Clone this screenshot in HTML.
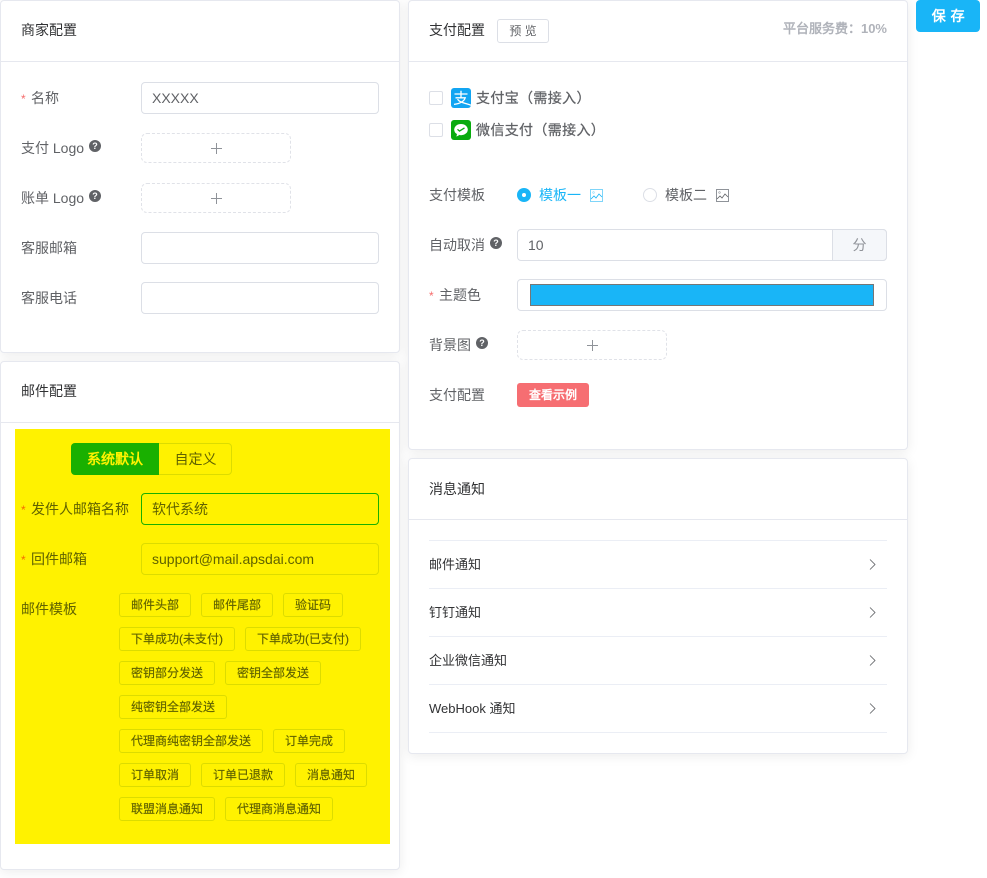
<!DOCTYPE html>
<html lang="zh"><head><meta charset="utf-8"><title>配置</title>
<style>
*{box-sizing:border-box;margin:0;padding:0}
html,body{width:987px;height:878px;background:#fff;overflow:hidden}
body{position:relative;font-family:"Liberation Sans","WenQuanYi Zen Hei",sans-serif;font-size:14px;color:#606266}
.a{position:absolute;white-space:nowrap}
.card{position:absolute;background:#fff;border:1px solid #e6e8ef;border-radius:4px;box-shadow:0 2px 12px rgba(0,0,0,.08)}
.line{position:absolute;height:1px;background:#e6e8ef}
.t{position:absolute;white-space:nowrap;line-height:20px;height:20px}
.h{color:#303133}
.inp{position:absolute;height:32px;border:1px solid #dcdfe6;border-radius:4px;background:#fff;line-height:30px;padding-left:10px;white-space:nowrap}
.up{position:absolute;width:150px;height:30px;border:1px dashed #e0e2e8;border-radius:6px}
.up:before{content:"";position:absolute;left:69px;top:13.5px;width:11px;height:1px;background:#8f9399}
.up:after{content:"";position:absolute;left:74px;top:8.5px;width:1px;height:11px;background:#8f9399}
.req{color:#f56c6c;font-size:12px;display:inline-block;width:10px}
.tag{position:absolute;height:24px;border:1px solid #dcdc00;border-radius:3px;color:#606200;font-size:12px;line-height:22px;text-align:center;white-space:nowrap;-webkit-text-stroke:.15px #606200}
.cb{position:absolute;width:14px;height:14px;border:1px solid #dcdfe6;border-radius:2px;background:#fff}
.n{position:absolute;font-size:13px;color:#303133;line-height:20px;height:20px;white-space:nowrap}
.pay{letter-spacing:.35px;-webkit-text-stroke:.25px #606266}
svg{position:absolute;display:block}
.q text{font:bold 9px "Liberation Sans",sans-serif;fill:#fff}
</style></head><body>

<!-- 商家配置 -->
<div class="card" style="left:0;top:0;width:400px;height:353px"></div>
<div class="line" style="left:1px;top:61px;width:398px"></div>
<div class="t h" style="left:21px;top:20px">商家配置</div>
<div class="t" style="left:21px;top:88px"><span class="req">*</span>名称</div>
<div class="inp" style="left:141px;top:82px;width:238px">XXXXX</div>
<div class="t" style="left:21px;top:138px">支付 Logo</div>
<svg class="q" style="left:89px;top:140px" width="12" height="12" viewBox="0 0 12 12"><circle cx="6" cy="6" r="6" fill="#606266"/><text x="6" y="9.2" text-anchor="middle">?</text></svg>
<div class="up" style="left:141px;top:133px"></div>
<div class="t" style="left:21px;top:188px">账单 Logo</div>
<svg class="q" style="left:89px;top:190px" width="12" height="12" viewBox="0 0 12 12"><circle cx="6" cy="6" r="6" fill="#606266"/><text x="6" y="9.2" text-anchor="middle">?</text></svg>
<div class="up" style="left:141px;top:183px"></div>
<div class="t" style="left:21px;top:238px">客服邮箱</div>
<div class="inp" style="left:141px;top:232px;width:238px"></div>
<div class="t" style="left:21px;top:288px">客服电话</div>
<div class="inp" style="left:141px;top:282px;width:238px"></div>

<!-- 邮件配置 -->
<div class="card" style="left:0;top:361px;width:400px;height:509px"></div>
<div class="line" style="left:1px;top:422px;width:398px"></div>
<div class="t h" style="left:21px;top:381px">邮件配置</div>
<div class="a" style="left:15px;top:429px;width:375px;height:415px;background:#fff200"></div>
<div class="a" style="left:71px;top:443px;width:161px;height:32px;border:1px solid #dcdc00;border-radius:4px"></div>
<div class="a" style="left:71px;top:443px;width:88px;height:32px;background:#19b000;border-radius:4px 0 0 4px;color:#fff200;text-align:center;line-height:32px;font-weight:bold">系统默认</div>
<div class="a" style="left:159px;top:443px;width:73px;height:32px;color:#606200;text-align:center;line-height:32px">自定义</div>
<div class="t" style="left:21px;top:499px;color:#606200"><span class="req" style="color:#f56c00">*</span>发件人邮箱名称</div>
<div class="inp" style="left:141px;top:493px;width:238px;background:none;border-color:#19b000;color:#606200">软代系统</div>
<div class="t" style="left:21px;top:549px;color:#606200"><span class="req" style="color:#f56c00">*</span>回件邮箱</div>
<div class="inp" style="left:141px;top:543px;width:238px;background:none;border-color:#dcdc00;color:#606200">support@mail.apsdai.com</div>
<div class="t" style="left:21px;top:599px;color:#606200">邮件模板</div>

<div class="tag" style="left:119px;top:593px;width:72px">邮件头部</div>
<div class="tag" style="left:201px;top:593px;width:72px">邮件尾部</div>
<div class="tag" style="left:283px;top:593px;width:60px">验证码</div>
<div class="tag" style="left:119px;top:627px;width:116px">下单成功(未支付)</div>
<div class="tag" style="left:245px;top:627px;width:116px">下单成功(已支付)</div>
<div class="tag" style="left:119px;top:661px;width:96px">密钥部分发送</div>
<div class="tag" style="left:225px;top:661px;width:96px">密钥全部发送</div>
<div class="tag" style="left:119px;top:695px;width:108px">纯密钥全部发送</div>
<div class="tag" style="left:119px;top:729px;width:144px">代理商纯密钥全部发送</div>
<div class="tag" style="left:273px;top:729px;width:72px">订单完成</div>
<div class="tag" style="left:119px;top:763px;width:72px">订单取消</div>
<div class="tag" style="left:201px;top:763px;width:84px">订单已退款</div>
<div class="tag" style="left:295px;top:763px;width:72px">消息通知</div>
<div class="tag" style="left:119px;top:797px;width:96px">联盟消息通知</div>
<div class="tag" style="left:225px;top:797px;width:108px">代理商消息通知</div>

<!-- 支付配置 -->
<div class="card" style="left:408px;top:0;width:500px;height:450px"></div>
<div class="line" style="left:409px;top:61px;width:498px"></div>
<div class="t h" style="left:429px;top:20px">支付配置</div>
<div class="a" style="left:497px;top:19px;width:52px;height:24px;border:1px solid #dcdfe6;border-radius:3px;font-size:12px;line-height:22px;text-align:center;color:#606266">预 览</div>
<div class="a" style="right:100px;top:20px;font-size:13px;line-height:17px;color:#b0b3ba;font-weight:bold">平台服务费：10%</div>

<div class="cb" style="left:429px;top:91px"></div>
<svg style="left:451px;top:88px" width="20" height="20" viewBox="0 0 20 20"><rect width="20" height="20" rx="3" fill="#12a5f2"/><path d="M3.5 6H16.5M10 2.8V9.6M4.5 9.8H14.2C13 13.5 9 15.6 3 16.4M6.5 11.2C9 14.6 13.5 15 20 17.2" fill="none" stroke="#fff" stroke-width="1.3"/></svg>
<div class="t pay" style="left:476px;top:88px">支付宝（需接入）</div>
<div class="cb" style="left:429px;top:123px"></div>
<svg style="left:451px;top:120px" width="20" height="20" viewBox="0 0 20 20"><rect width="20" height="20" rx="3" fill="#09ab0e"/><ellipse cx="10" cy="9.6" rx="6.8" ry="5.6" fill="#fff"/><path d="M6 14l-.6 2.6 3-1.6z" fill="#fff"/><path d="M6.5 9.3l2 1.8 5-3.2" fill="none" stroke="#09ab0e" stroke-width="1.3"/></svg>
<div class="t pay" style="left:476px;top:120px">微信支付（需接入）</div>

<div class="t" style="left:429px;top:185px">支付模板</div>
<div class="a" style="left:517px;top:188px;width:14px;height:14px;border-radius:50%;background:#19b5f7"></div>
<div class="a" style="left:522px;top:193px;width:4px;height:4px;border-radius:50%;background:#fff"></div>
<div class="t" style="left:539px;top:185px;color:#19b5f7">模板一</div>
<svg style="left:590px;top:189px" width="13" height="13" viewBox="0 0 13 13" fill="none" stroke="#7fd5f9"><rect x=".5" y=".5" width="12" height="12"/><path d="M1 10l3-3 2 2 3-4 3 3" stroke-width=".8" stroke="#19b5f7"/><circle cx="3.5" cy="3.5" r=".8" stroke-width=".6"/></svg>
<div class="a" style="left:643px;top:188px;width:14px;height:14px;border-radius:50%;border:1px solid #dcdfe6"></div>
<div class="t" style="left:665px;top:185px">模板二</div>
<svg style="left:716px;top:189px" width="13" height="13" viewBox="0 0 13 13" fill="none" stroke="#8f9399"><rect x=".5" y=".5" width="12" height="12"/><path d="M1 10l3-3 2 2 3-4 3 3" stroke-width=".8" stroke="#606266"/><circle cx="3.5" cy="3.5" r=".8" stroke-width=".6"/></svg>

<div class="t" style="left:429px;top:235px">自动取消</div>
<svg class="q" style="left:490px;top:237px" width="12" height="12" viewBox="0 0 12 12"><circle cx="6" cy="6" r="6" fill="#606266"/><text x="6" y="9.2" text-anchor="middle">?</text></svg>
<div class="inp" style="left:517px;top:229px;width:370px;">10</div>
<div class="a" style="left:832px;top:229px;width:55px;height:32px;background:#f5f7fa;border:1px solid #dcdfe6;border-radius:0 4px 4px 0;text-align:center;line-height:30px;color:#909399">分</div>

<div class="t" style="left:429px;top:285px"><span class="req">*</span>主题色</div>
<div class="inp" style="left:517px;top:279px;width:370px"></div>
<div class="a" style="left:530px;top:284px;width:344px;height:22px;background:#19b5f7;border:1px solid #767676"></div>

<div class="t" style="left:429px;top:335px">背景图</div>
<svg class="q" style="left:476px;top:337px" width="12" height="12" viewBox="0 0 12 12"><circle cx="6" cy="6" r="6" fill="#606266"/><text x="6" y="9.2" text-anchor="middle">?</text></svg>
<div class="up" style="left:517px;top:330px"></div>

<div class="t" style="left:429px;top:385px">支付配置</div>
<div class="a" style="left:517px;top:383px;width:72px;height:24px;border-radius:3px;background:#f66e72;color:#fff;font-size:12px;font-weight:bold;text-align:center;line-height:24px">查看示例</div>

<!-- 保存 -->
<div class="a" style="left:916px;top:0;width:64px;height:32px;background:#19b5f7;border-radius:4px;color:#fff;font-weight:bold;text-align:center;line-height:32px;letter-spacing:.5px;padding-left:1px">保 存</div>

<!-- 消息通知 -->
<div class="card" style="left:408px;top:458px;width:500px;height:296px"></div>
<div class="line" style="left:409px;top:519px;width:498px"></div>
<div class="t h" style="left:429px;top:479px">消息通知</div>
<div class="line" style="left:429px;top:540px;width:458px;background:#ebeef5"></div>
<div class="n" style="left:429px;top:555px">邮件通知</div>
<svg style="left:868px;top:558px" width="9" height="13" viewBox="0 0 9 13"><path d="M2 1.5l5 5-5 5" fill="none" stroke="#606266" stroke-width=".85"/></svg>
<div class="line" style="left:429px;top:588px;width:458px;background:#ebeef5"></div>
<div class="n" style="left:429px;top:603px">钉钉通知</div>
<svg style="left:868px;top:606px" width="9" height="13" viewBox="0 0 9 13"><path d="M2 1.5l5 5-5 5" fill="none" stroke="#606266" stroke-width=".85"/></svg>
<div class="line" style="left:429px;top:636px;width:458px;background:#ebeef5"></div>
<div class="n" style="left:429px;top:651px">企业微信通知</div>
<svg style="left:868px;top:654px" width="9" height="13" viewBox="0 0 9 13"><path d="M2 1.5l5 5-5 5" fill="none" stroke="#606266" stroke-width=".85"/></svg>
<div class="line" style="left:429px;top:684px;width:458px;background:#ebeef5"></div>
<div class="n" style="left:429px;top:699px">WebHook 通知</div>
<svg style="left:868px;top:702px" width="9" height="13" viewBox="0 0 9 13"><path d="M2 1.5l5 5-5 5" fill="none" stroke="#606266" stroke-width=".85"/></svg>
<div class="line" style="left:429px;top:732px;width:458px;background:#ebeef5"></div>

</body></html>
